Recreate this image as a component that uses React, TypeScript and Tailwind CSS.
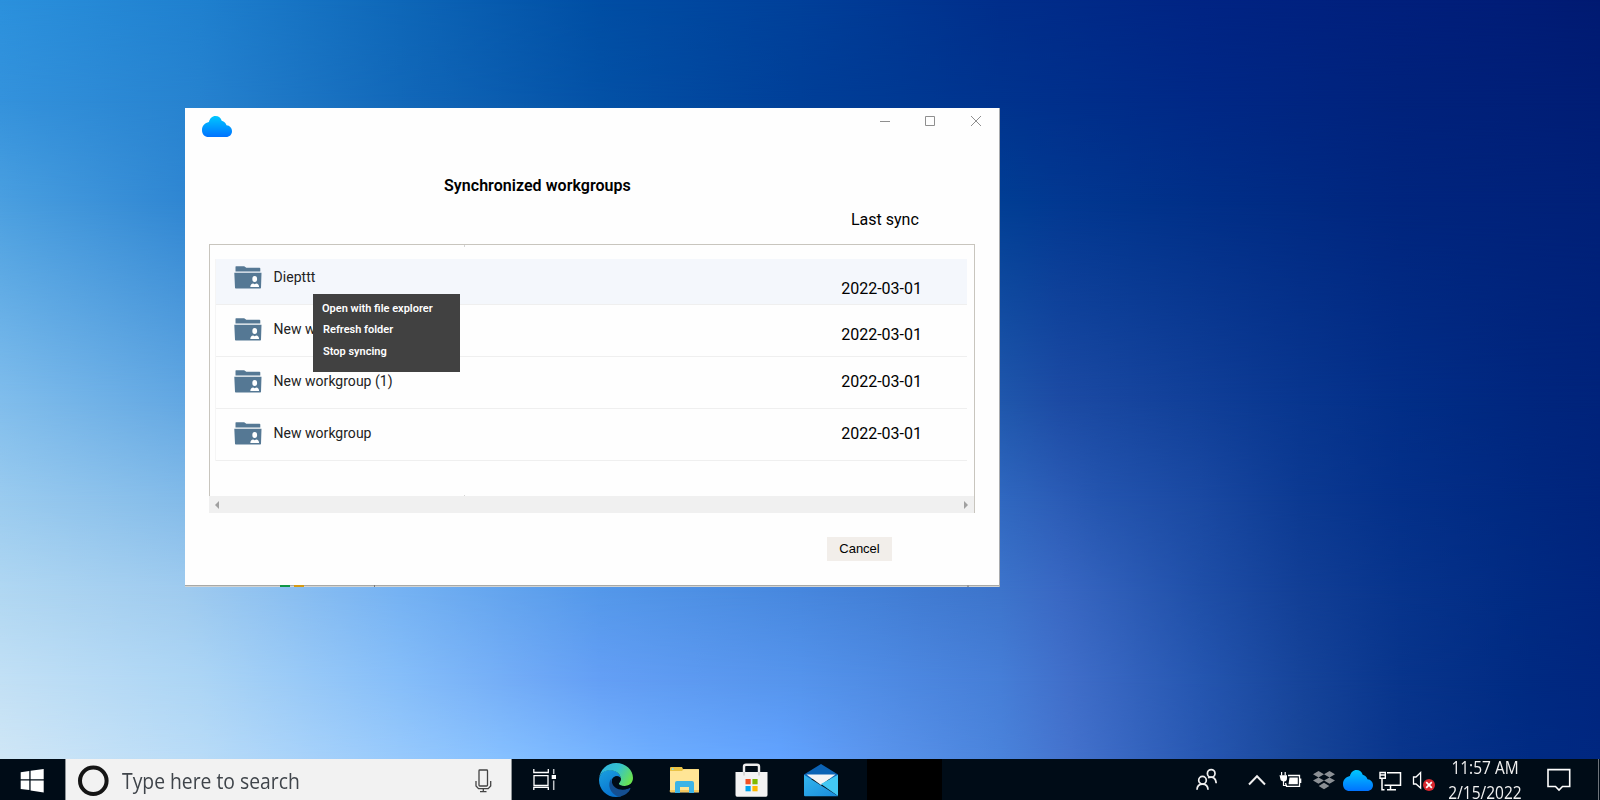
import type { ReactNode } from "react";

type Stop = [number, string];

const SKY: { y: number; stops: Stop[] }[] = [
  { y: 0, stops: [[0, "#2b91dd"], [200, "#1f80cf"], [400, "#0e67b8"], [600, "#004ea4"], [800, "#00409a"], [1000, "#002e8b"], [1200, "#002484"], [1400, "#001f7c"], [1500, "#001d78"], [1600, "#001a72"]] },
  { y: 100, stops: [[0, "#3492dc"], [200, "#2682cf"], [400, "#1268b9"], [600, "#0351a6"], [800, "#003f98"], [1000, "#00338e"], [1200, "#002886"], [1400, "#00227c"], [1600, "#001d75"]] },
  { y: 200, stops: [[0, "#4a9fe0"], [185, "#2f86d2"], [1000, "#003e94"], [1060, "#023891"], [1200, "#002f88"], [1400, "#00257e"], [1600, "#002078"]] },
  { y: 400, stops: [[0, "#80bdec"], [185, "#62a7e2"], [1000, "#1f57ac"], [1060, "#1c4ba4"], [1200, "#103f98"], [1300, "#08368f"], [1400, "#022e87"], [1530, "#00267e"], [1600, "#00237b"]] },
  { y: 500, stops: [[0, "#9acbef"], [185, "#83bbe9"], [1000, "#3068c0"], [1060, "#2b5cb6"], [1100, "#2455af"], [1200, "#1a49a2"], [1300, "#0c3a92"], [1400, "#043089"], [1530, "#002880"], [1600, "#00247c"]] },
  { y: 590, stops: [[0, "#b0d7f2"], [185, "#9fcbef"], [400, "#75b2f3"], [600, "#5498ea"], [800, "#4787de"], [1000, "#3d74cb"], [1060, "#3968c3"], [1200, "#1f4fa8"], [1300, "#123f96"], [1400, "#07348c"], [1530, "#002a82"], [1600, "#00257e"]] },
  { y: 680, stops: [[0, "#c2e0f5"], [200, "#acd5f5"], [400, "#86bef9"], [600, "#649ff5"], [800, "#5594ec"], [1000, "#467ed7"], [1070, "#406ec9"], [1200, "#2556b0"], [1300, "#16449a"], [1400, "#08358c"], [1530, "#002a82"], [1600, "#00267f"]] },
  { y: 758, stops: [[0, "#cfe6f6"], [200, "#b8dbf7"], [400, "#97c9fc"], [500, "#86c0ff"], [650, "#6eaeff"], [780, "#62a3ff"], [880, "#5a94ec"], [1000, "#4a83db"], [1070, "#4472cd"], [1200, "#2858b2"], [1300, "#184699"], [1400, "#09358c"], [1530, "#002b83"], [1600, "#002780"]] },
];

function Wallpaper() {
  return (
    <div className="absolute inset-0">
      {SKY.map((band, i) => {
        const from = i ? SKY[i - 1].y : 0;
        const mask = i ? `linear-gradient(to bottom, transparent ${from}px, #000 ${band.y}px)` : undefined;
        return (
          <div
            key={band.y}
            className="absolute inset-0"
            style={{
              backgroundImage: `linear-gradient(to right, ${band.stops.map(([x, c]) => `${c} ${x}px`).join(", ")})`,
              maskImage: mask,
            }}
          />
        );
      })}
    </div>
  );
}

function Cloud({ id }: { id: string }) {
  return (
    <svg width="30" height="21" viewBox="0 0 30 21" className="block shrink-0">
      <defs>
        <linearGradient id={id} x1="0" y1="0" x2="0" y2="1">
          <stop offset="0" stopColor="#00c8ff" />
          <stop offset="1" stopColor="#0072ff" />
        </linearGradient>
      </defs>
      <path
        fill={`url(#${id})`}
        d="M6.5 21C2.8 21 0 18.2 0 14.2C0 9.8 3 6.9 6.9 6.1C7.7 2.5 10.2 0 13.5 0C16.6 0 18.9 2 19.7 4.8C22.3 5.6 23.9 7.3 24.5 9.2C27.8 9.5 30 12 30 15.2C30 18.6 27.5 21 24 21Z"
      />
    </svg>
  );
}

function FolderIcon() {
  return (
    <svg width="28" height="23" viewBox="0 0 28 23" className="block shrink-0">
      <path fill="#557894" d="M1.5 0.8Q1.5 0.3 2 0.3H10.2L12.3 1.7H25.5Q26.3 1.7 26.3 2.5V5.6H1.5Z" />
      <path fill="#557894" d="M0.3 6.7H27.5L27 21.7Q27 22.5 26.2 22.5H1.8Q1 22.5 1 21.7Z" />
      <ellipse cx="20.7" cy="13" rx="2.4" ry="3" fill="#fff" />
      <path fill="#fff" d="M16.3 21Q16.5 18 19.2 17.6L20.7 18.2L22.2 17.6Q24.9 18 25.1 21Z" />
    </svg>
  );
}

const ROWS = [
  { name: "Diepttt", box: "h-[46px] bg-[#f4f7fc] pt-[7px]", date: "mt-[11px]" },
  { name: "New workgroup (2)", box: "h-[52px] pt-[13px]", date: "mt-[5px]" },
  { name: "New workgroup (1)", box: "h-[52px] pt-[13px]", date: "mt-0" },
  { name: "New workgroup", box: "h-[52px] pt-[13px]", date: "mt-0" },
];

function SyncWindow() {
  return (
    <div className="relative ml-[185px] mt-[108px] flex h-[479px] w-[815px] flex-col border-r border-[#a9abae] bg-[#fefefe]">
      <div className="flex h-[40px] items-start">
        <div className="ml-[17px] mt-[8px]">
          <Cloud id="cloud-title" />
        </div>
        <svg width="104" height="12" viewBox="0 0 104 12" className="ml-auto mr-[17px] mt-[7px]" fill="none" stroke="#8f8f8f">
          <path d="M2 6.5H12M47.5 1.5H56.5V10.5H47.5Z" />
          <path d="M93 1L103 11M103 1L93 11" />
        </svg>
      </div>
      <div className="ml-[259px] mt-[28px] text-[16px] font-semibold leading-[20px] tracking-[0.04px]">Synchronized workgroups</div>
      <div className="ml-[666px] mt-[14px] text-[16px] leading-[20px]">Last sync</div>
      <div className="ml-[24px] mt-[14px] flex h-[269px] w-[766px] flex-col border-r border-[#c8c5be]">
        <div className="relative flex h-[252px] flex-col border-l border-t border-[#c8c5be] pl-[5px] pr-[7px] pt-[14px]">
          <span className="absolute left-[254px] top-0 h-[2px] w-px bg-[#d5d5d5]" />
          <span className="absolute bottom-0 left-[254px] h-px w-px bg-[#d5d5d5]" />
          <div className="border-l border-[#f5f5f5]">
            {ROWS.map((r) => (
              <div key={r.name} className={`flex items-start border-b border-[#efefef] pl-[18px] ${r.box}`}>
                <FolderIcon />
                <div className="ml-[11.6px] mt-px text-[14px] leading-[20px] tracking-[0.02px] text-[#222]">{r.name}</div>
                <div className={`ml-auto mr-[45px] text-[16px] leading-[24px] ${r.date}`}>2022-03-01</div>
              </div>
            ))}
          </div>
        </div>
        <div className="flex h-[17px] items-center justify-between bg-[#f0f0f0] px-[6px]">
          <svg width="4" height="8" viewBox="0 0 4 8"><path d="M4 0V8L0 4Z" fill="#a0a0a0" /></svg>
          <svg width="4" height="8" viewBox="0 0 4 8"><path d="M0 0V8L4 4Z" fill="#a0a0a0" /></svg>
        </div>
      </div>
      <button className="ml-[642px] mt-[24px] h-[24px] w-[65px] bg-[#f2eeea] pb-px font-['Liberation_Sans',sans-serif] text-[13px] leading-[22px]">
        Cancel
      </button>
      <div className="mt-auto flex h-[2px] border-t border-[#a8a9a7] bg-[#d3d4d2]">
        <span className="-mt-px ml-[95px] h-[2px] w-[10px] bg-[#109646]" />
        <span className="-mt-px ml-[4px] h-[2px] w-[10px] bg-[#d59a14]" />
        <span className="-mt-px ml-[70px] h-[2px] w-px bg-[#777]" />
        <span className="-mt-px ml-[592px] h-[2px] w-[2px] bg-[#999]" />
      </div>
      <div className="absolute left-[128px] top-[186px] flex h-[78px] w-[147px] flex-col bg-[#414141] pl-[9px] pt-[5px] text-[11px] font-semibold text-white">
        <div className="h-[21px] leading-[20px]">Open with file explorer</div>
        <div className="ml-px h-[22px] leading-[20px]">Refresh folder</div>
        <div className="ml-px leading-[20px]">Stop syncing</div>
      </div>
    </div>
  );
}

function BarIcon({ width, gap, children }: { width: number; gap: string; children: ReactNode }) {
  return (
    <svg width={width} height="41" viewBox={`0 0 ${width} 41`} className={`block shrink-0 ${gap}`} fill="none">
      {children}
    </svg>
  );
}

function Taskbar() {
  return (
    <div className="flex h-[41px] w-full overflow-hidden bg-[#000c17]">
      <div className="flex w-[65px] shrink-0">
        <BarIcon width={24} gap="ml-[20px]">
          <path fill="#fff" d="M0.7 13.2L9.3 12V20.2H0.7ZM10.6 11.8L23.7 10V20.2H10.6ZM0.7 21.5H9.3V31L0.7 29.9ZM10.6 21.5H23.7V33.5L10.6 31.4Z" />
        </BarIcon>
      </div>
      <div className="flex w-[447px] shrink-0 border-x border-[#8d9296] bg-[#f2f2f2]">
        <BarIcon width={32} gap="ml-[11px]">
          <circle cx="16.3" cy="21.8" r="13.3" stroke="#151515" strokeWidth="4" />
        </BarIcon>
        <div className="ml-[13px] w-[180px] origin-left scale-x-[0.92] whitespace-nowrap font-['Open_Sans',sans-serif] text-[21px] leading-[45px] text-[#3f444a]">
          Type here to search
        </div>
        <BarIcon width={17} gap="ml-auto mr-[19px]">
          <rect x="4" y="11" width="8.5" height="16" rx="0.8" stroke="#444" strokeWidth="1.3" />
          <path d="M1 22V27L3.5 29.7H13.2L15.7 27V22M8.3 29.7V32.4M5 32.6H11.5" stroke="#444" strokeWidth="1.3" />
        </BarIcon>
      </div>
      <BarIcon width={24} gap="ml-[21px]">
        <path stroke="#fff" strokeWidth="1.3" d="M0.8 10V13.5H15.3V10M1 16.6H15V26.5H1ZM0.8 31V28.4H15.3V31" />
        <path stroke="#bfc3c7" strokeWidth="1.5" d="M20.7 10V15M20.7 21.5V31" />
        <path fill="#fff" d="M18.7 16H23V20H18.7Z" />
      </BarIcon>
      <BarIcon width={34} gap="ml-[42px]">
        <defs>
          <linearGradient id="edge-top" x1="0" y1="0.2" x2="1" y2="0.6">
            <stop offset="0" stopColor="#2fb3e0" />
            <stop offset="0.5" stopColor="#35c2cf" />
            <stop offset="1" stopColor="#6ae34f" />
          </linearGradient>
          <linearGradient id="edge-left" x1="0" y1="0" x2="0.5" y2="1">
            <stop offset="0" stopColor="#1aa0df" />
            <stop offset="1" stopColor="#0873cf" />
          </linearGradient>
        </defs>
        <path fill="url(#edge-left)" d="M0 21C0.2 15 5 11 11 11C17 11 21.5 15 21.8 19.5C20 15.5 13 16.5 12.8 23C12.6 28.5 17 33 23 34L22 37.3C10 40.5 0 32 0 21Z" />
        <path fill="#144f91" d="M12.3 19.5C8 25 10.5 35 20 37.8C26 36.7 30 33.5 31.4 29.8C31.7 29 31 28.7 30.3 29.1C22.5 33 13.5 29.5 12.8 22.5C12.7 21.3 12.5 20.4 12.3 19.5Z" />
        <path fill="url(#edge-top)" d="M0 20C1 10.5 8 4 17 4C27 4 34 11 34 19C34 24 30 27 25.5 27C22 27 19.8 25.8 19.8 24.6C19.8 23.8 21.8 23 21.8 19.8C21.8 15 17 11.2 11 11.2C5 11.2 0.6 15 0 20Z" />
        <path fill="#000c17" d="M13 20.5C15 15.5 21.7 17 21.8 20C21.8 22.8 19.8 23.7 19.8 24.7C20 26.3 23 27.3 26.5 27C29.5 26.8 31.6 25.5 33 24L31.8 28.2C24 33 13.8 29 13 20.5Z" />
      </BarIcon>
      <BarIcon width={31} gap="ml-[36px]">
        <path fill="#eac345" d="M1 9Q1 8 2 8H13L14 10H29Q30 10 30 11V31H1Z" />
        <path fill="#ffe596" d="M1 12H13L14.5 10.3H29.5Q30 10.3 30 11V33Q30 33.5 29 33.5H2Q1 33.5 1 32.5Z" />
        <path fill="#f3c75e" d="M0.8 31H30V33H0.8Z" />
        <path fill="#3cb4e7" d="M6 24Q6 22 8 22H23Q25 22 25 24V34H20V28H11V34H6Z" />
        <path fill="#7ee4f4" d="M3 9.3H4.5V11H3Z" />
      </BarIcon>
      <BarIcon width={33} gap="ml-[35px]">
        <path stroke="#ededed" strokeWidth="2.4" d="M9 20V7.5Q9 5.7 11 5.7H22Q24 5.7 24 7.5V20" />
        <path fill="#f3f3f3" d="M0.5 13H32.5V36Q32.5 37.7 31 37.7H2Q0.5 37.7 0.5 36Z" />
        <path stroke="#d5d5d5" strokeWidth="1.8" d="M9 13V16.5M24 13V16.5" />
        <path fill="#f15022" d="M10.5 20H15.7V25.3H10.5Z" />
        <path fill="#7fba00" d="M17.4 20H22.6V25.3H17.4Z" />
        <path fill="#00a4ef" d="M10.5 27H15.7V32.3H10.5Z" />
        <path fill="#ffb900" d="M17.4 27H22.6V32.3H17.4Z" />
      </BarIcon>
      <BarIcon width={34} gap="ml-[36px]">
        <defs>
          <linearGradient id="mail-front" x1="0" y1="0" x2="1" y2="1">
            <stop offset="0" stopColor="#34b7ee" />
            <stop offset="1" stopColor="#198bdc" />
          </linearGradient>
        </defs>
        <path fill="#0b63b5" d="M0 15.5L17 5L34 15.5V20H0Z" />
        <path fill="#f4f4f5" d="M2.5 15.5H31.5L17 26Z" />
        <path fill="#42c8f4" d="M34 15.8L17 25L34 37Z" />
        <path fill="url(#mail-front)" d="M0 15.8L34 37Q34 37.3 33 37.3H1Q0 37.3 0 36Z" />
      </BarIcon>
      <div className="ml-[29px] h-full w-[75px] shrink-0 bg-black" />

      <BarIcon width={22} gap="ml-auto">
        <g stroke="#f0f0f0" strokeWidth="1.7">
          <circle cx="15.2" cy="14.4" r="3.8" />
          <circle cx="6.5" cy="21.2" r="3.8" />
          <path d="M1 30.8Q1.2 25.2 6.5 25.2T12 30.8M12 18.8Q19.6 16.5 20.2 24.3" />
        </g>
      </BarIcon>
      <BarIcon width={18} gap="ml-[30px]">
        <path stroke="#f0f0f0" strokeWidth="2" d="M1 25.5L9 17.3L17 25.5" />
      </BarIcon>
      <BarIcon width={23} gap="ml-[13px]">
        <path stroke="#fff" strokeWidth="1.3" d="M9 16.5H20.5V27.3H7.5L6.5 24" />
        <path fill="#fff" d="M10.5 18.5H18.8V25.3H9.5ZM20.5 19.5H22.3V24H20.5Z" />
        <path fill="#fff" d="M0.5 16.2H8V19Q8 22.3 5.5 22.5H4.5Q1.2 22 1.2 19Z" />
        <path stroke="#fff" strokeWidth="1.2" d="M2.6 13V16.5M6.2 13V16.5M4.5 22V26.5H8" />
      </BarIcon>
      <BarIcon width={22} gap="ml-[11px]">
        <path fill="#8b9095" d="M5.5 12L11 15.2L5.5 18.4L0 15.2ZM16.5 12L22 15.2L16.5 18.4L11 15.2ZM5.5 18.4L11 21.6L5.5 24.8L0 21.6ZM16.5 18.4L22 21.6L16.5 24.8L11 21.6ZM11 23.7L16.3 27L11 30.3L5.7 27Z" />
      </BarIcon>
      <div className="ml-[8px] mt-[11px]">
        <Cloud id="cloud-tray" />
      </div>
      <BarIcon width={23} gap="ml-[6px]">
        <path stroke="#fff" strokeWidth="1.5" d="M8 13.7H21.5V26.3H5.5M11.5 26.5V30.5M8 30.7H17M3 20V30.7H5.5" />
        <path stroke="#fff" strokeWidth="1.4" d="M1 13.5H6.3V19.2H1ZM1 16H6.3" />
      </BarIcon>
      <BarIcon width={23} gap="ml-[10px]">
        <path stroke="#fff" strokeWidth="1.3" d="M1.5 18H4L8.6 13.5V29L4 25H1.5Z" />
        <circle cx="17" cy="26" r="6" fill="#d9272e" />
        <path stroke="#fff" strokeWidth="1.7" d="M14.2 23.2L19.8 28.8M19.8 23.2L14.2 28.8" />
      </BarIcon>
      <div className="ml-[5px] flex w-[90px] shrink-0 scale-x-[0.86] flex-col whitespace-nowrap text-center font-['Open_Sans',sans-serif] text-[18px] text-[#f2f2f2]">
        <div className="-mt-[5px] h-[26px] leading-[26px]">11:57 AM</div>
        <div className="h-[25px] leading-[25px]">2/15/2022</div>
      </div>
      <BarIcon width={24} gap="ml-[17px]">
        <path stroke="#fff" strokeWidth="1.6" d="M1 10.6H22.7V27.5H15.5L12 31L8.5 27.5H1Z" />
      </BarIcon>
      <div className="ml-[27px] mr-px h-full w-px shrink-0 bg-[#6d737a]" />
    </div>
  );
}

export default function App() {
  return (
    <div className="relative h-[800px] w-[1600px] overflow-hidden bg-[#00338f] font-[Roboto,sans-serif] text-black">
      <Wallpaper />
      <div className="relative flex h-full flex-col">
        <SyncWindow />
        <div className="mt-auto">
          <Taskbar />
        </div>
      </div>
    </div>
  );
}
